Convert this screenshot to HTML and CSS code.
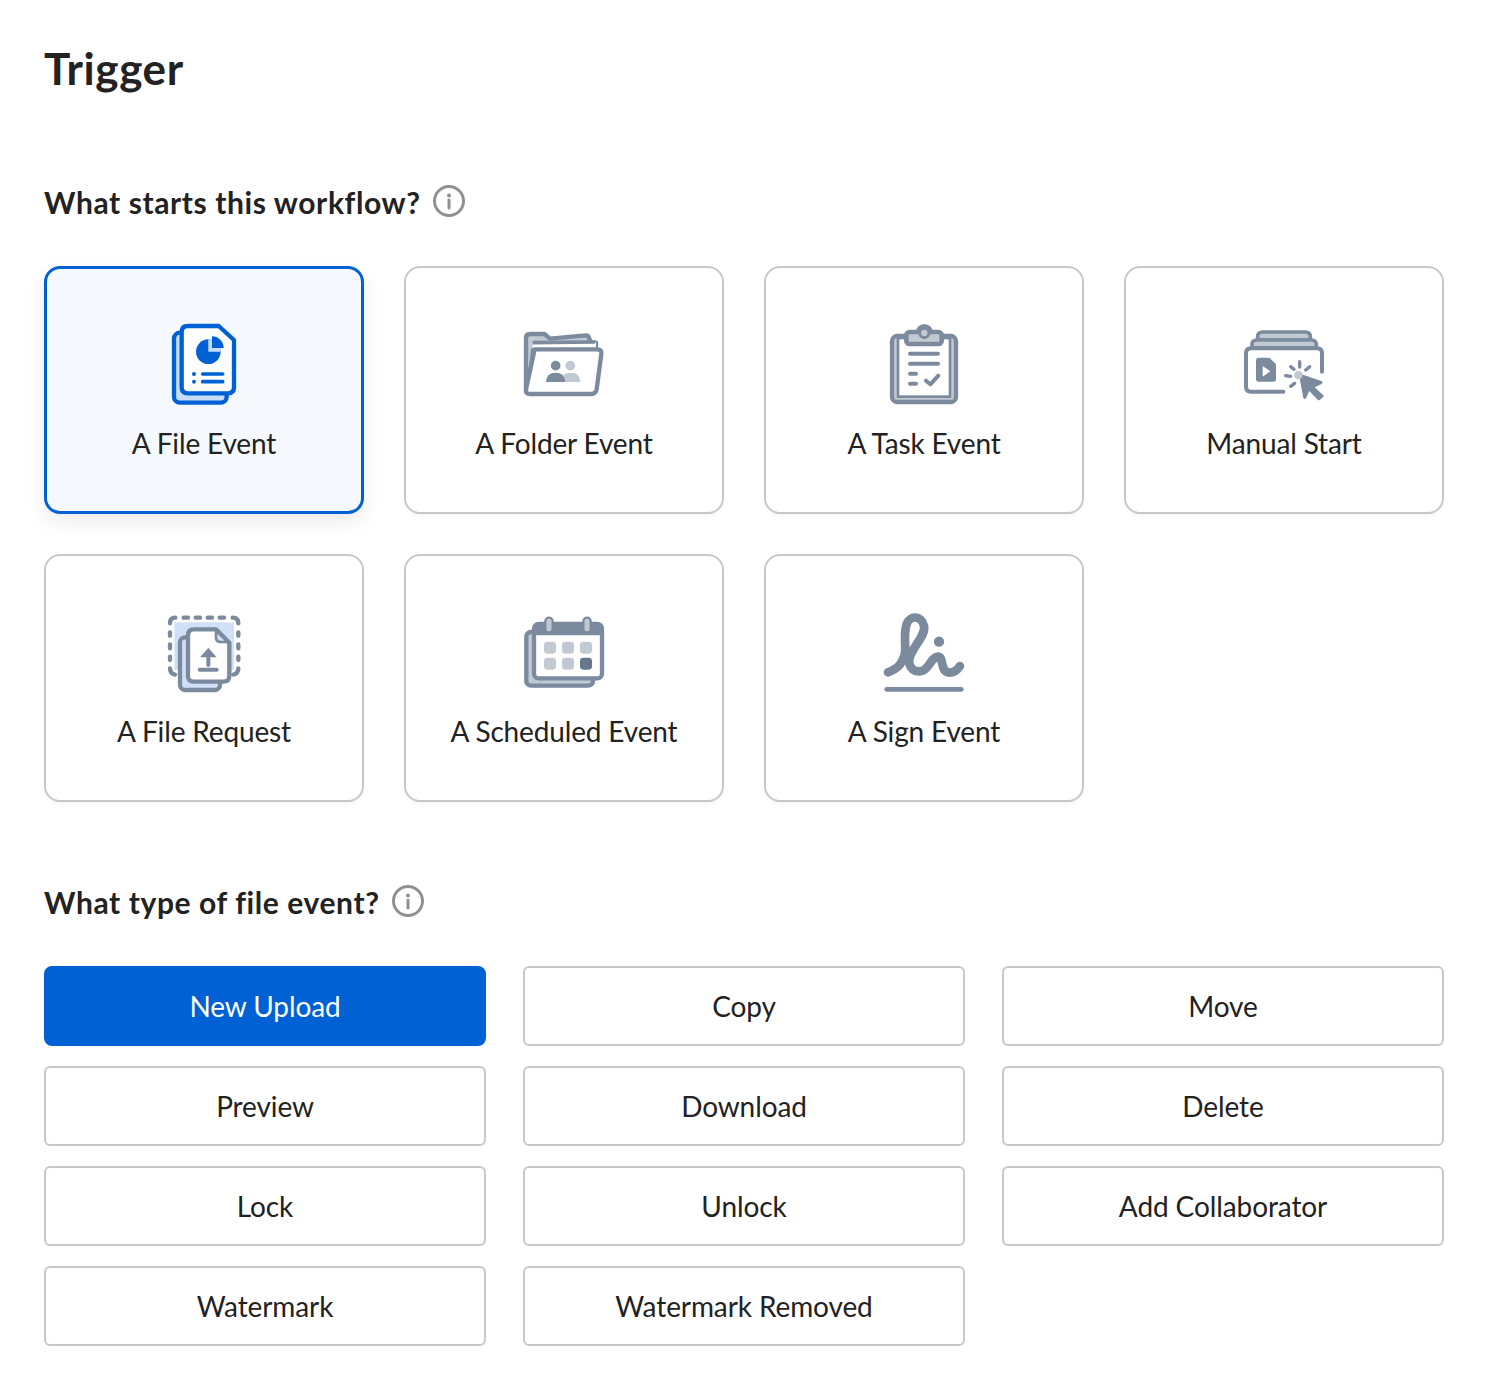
FILE: index.html
```html
<!DOCTYPE html>
<html lang="en">
<head>
<meta charset="utf-8">
<title>Trigger</title>
<link rel="stylesheet" href="styles.css">
</head>
<body>
<main class="page">
  <h1 class="title">Trigger</h1>
  <div class="heading heading-first"><h2>What starts this workflow?</h2>
    <svg class="info" viewBox="0 0 32 32"><circle cx="16" cy="16" r="14.5"/><circle class="dot" cx="16" cy="10.5" r="2"/><path d="M16 15v8"/></svg>
  </div>
  <section class="cards">
    <button class="card selected">
      <svg class="icon" viewBox="-3 0 390 330">
        <rect x="102" y="68" width="158" height="210" rx="18" fill="#c6dcf7" stroke="#0061d5" stroke-width="13"/>
        <path d="M143 48H236L282 90V232Q282 250 264 250H143Q125 250 125 232V66Q125 48 143 48Z" fill="#fff" stroke="#0061d5" stroke-width="13" stroke-linejoin="round"/>
        <circle cx="205" cy="125" r="37" fill="#0061d5"/>
        <path d="M205 125V88A37 37 0 0 1 242 125Z" fill="#c6dcf7"/>
        <path d="M216 79A35 35 0 0 1 251 114H216Z" fill="#0061d5"/>
        <circle cx="162" cy="192" r="6" fill="#0061d5"/><circle cx="162" cy="215" r="6" fill="#0061d5"/>
        <path d="M188 192H248M188 215H248" stroke="#0061d5" stroke-width="11" stroke-linecap="round"/>
      </svg>
      <span>A File Event</span>
    </button>
    <button class="card">
      <svg class="icon" viewBox="-3 0 390 330">
        <path d="M78 245V84Q78 72 90 72H133L150 86L258 76Q266 76 268 86L272 98H288V118H100L84 250Z" fill="#c1cad3" stroke="#7b8b9d" stroke-width="13" stroke-linejoin="round"/>
        <path d="M98 100L288 96V118H98Z" fill="#fff"/>
        <path d="M98 98L286 96" stroke="#7b8b9d" stroke-width="11"/>
        <path d="M104 118H292Q306 118 304 132L290 238Q288 252 274 252H90Q76 252 78 238Z" fill="#fff" stroke="#7b8b9d" stroke-width="13" stroke-linejoin="round"/>
        <circle cx="167" cy="167" r="14.5" fill="#7b8b9d"/>
        <circle cx="211" cy="167" r="14.5" fill="#c1cad3"/>
        <path d="M196 216H241Q240 188 213 188Q200 188 190 194Q196 204 196 216Z" fill="#c1cad3"/>
        <path d="M138 216H196Q195 188 167 188Q139 188 138 216Z" fill="#7b8b9d"/>
      </svg>
      <span>A Folder Event</span>
    </button>
    <button class="card">
      <svg class="icon" viewBox="-3 0 390 330">
        <rect x="96" y="78" width="192" height="198" rx="16" fill="#c1cad3" stroke="#7b8b9d" stroke-width="13"/>
        <rect x="114" y="84" width="156" height="176" fill="#fff" stroke="#7b8b9d" stroke-width="8"/>
        <circle cx="193" cy="68" r="26" fill="#7b8b9d"/>
        <rect x="139" y="66" width="106" height="36" rx="10" fill="#c1cad3" stroke="#7b8b9d" stroke-width="14"/>
        <circle cx="193" cy="69" r="14" fill="#c1cad3" stroke="#7b8b9d" stroke-width="9"/>
        <path d="M150 131H234M150 161H234M150 191H168M150 221H168" stroke="#7b8b9d" stroke-width="12" stroke-linecap="round"/>
        <path d="M198 212L211 223L235 197" fill="none" stroke="#7b8b9d" stroke-width="12" stroke-linecap="round" stroke-linejoin="round"/>
      </svg>
      <span>A Task Event</span>
    </button>
    <button class="card">
      <svg class="icon" viewBox="-3 0 390 330">
        <path d="M113 90V80Q113 66 128 66H256Q271 66 271 80V90Z" fill="#c1cad3" stroke="#7b8b9d" stroke-width="11" stroke-linejoin="round"/>
        <path d="M96 114V104Q96 90 110 90H274Q289 90 289 104V114Z" fill="#c1cad3" stroke="#7b8b9d" stroke-width="11" stroke-linejoin="round"/>
        <path d="M306 185V130Q306 115 291 115H93Q78 115 78 130V230Q78 245 93 245H190" fill="none" stroke="#7b8b9d" stroke-width="12" stroke-linecap="round"/>
        <path d="M116 143H148L168 163V207Q168 215 160 215H116Q108 215 108 207V151Q108 143 116 143Z" fill="#7b8b9d"/>
        <path d="M128 168L151 184L128 200Z" fill="#fff"/>
        <path d="M239 155V171M212 170L222 178M269 170L257 180M197 197L212 199M212 229L224 220" stroke="#7b8b9d" stroke-width="10" stroke-linecap="round"/>
        <path d="M236 190L306 214Q310 218 305 222L284 232L310 256Q312 259 309 262L299 270Q296 272 293 269L268 243L258 265Q254 269 250 264Z" fill="#7b8b9d"/>
        <circle cx="235" cy="195" r="13" fill="#c1cad3"/>
      </svg>
      <span>Manual Start</span>
    </button>
    <button class="card">
      <svg class="icon" viewBox="-3 -6 390 330">
        <rect x="103" y="67" width="179" height="143" fill="#cfe0f7"/>
        <path d="M90 70Q90 53 106 53M131 53H144M167 53H180M203 53H216M239 53H252M278 53Q295 53 295 70M295 97V107M295 133V145M295 170V180M295 205Q295 221 280 224M90 97V107M90 133V145M90 170V180M90 205Q90 221 105 224" fill="none" stroke="#7b8b9d" stroke-width="13" stroke-linecap="round"/>
        <rect x="120" y="112" width="120" height="158" rx="16" fill="#cfe0f7" stroke="#7b8b9d" stroke-width="13"/>
        <path d="M162 88H228L268 128V228Q268 245 250 245H162Q144 245 144 228V106Q144 88 162 88Z" fill="#fff" stroke="#7b8b9d" stroke-width="13" stroke-linejoin="round"/>
        <path d="M228 92V112Q228 126 242 126H264Z" fill="#cfe0f7" stroke="#7b8b9d" stroke-width="8" stroke-linejoin="round"/>
        <path d="M205 143L230 172H180Z" fill="#7b8b9d"/>
        <path d="M205 168V195M179 209H230" stroke="#7b8b9d" stroke-width="12" stroke-linecap="round"/>
      </svg>
      <span>A File Request</span>
    </button>
    <button class="card">
      <svg class="icon" viewBox="-3 -6 390 330">
        <rect x="79" y="96" width="200" height="161" rx="14" fill="#c1cad3" stroke="#7b8b9d" stroke-width="13"/>
        <rect x="102" y="72" width="204" height="163" rx="14" fill="#fff" stroke="#7b8b9d" stroke-width="13"/>
        <path d="M102 72H306V106H102Z" fill="#7b8b9d"/>
        <rect x="136" y="53" width="22" height="44" rx="11" fill="#c1cad3" stroke="#7b8b9d" stroke-width="7"/>
        <rect x="250" y="53" width="22" height="44" rx="11" fill="#c1cad3" stroke="#7b8b9d" stroke-width="7"/>
        <g fill="#c1cad3">
          <rect x="132" y="125" width="36" height="36" rx="10"/><rect x="186" y="125" width="36" height="36" rx="10"/><rect x="240" y="125" width="36" height="36" rx="10"/>
          <rect x="132" y="173" width="36" height="36" rx="10"/><rect x="186" y="173" width="36" height="36" rx="10"/>
        </g>
        <rect x="240" y="173" width="36" height="36" rx="10" fill="#66788c"/>
      </svg>
      <span>A Scheduled Event</span>
    </button>
    <button class="card">
      <svg class="icon" viewBox="-3 -6 390 330">
        <path d="M84 217C105 208 125 200 135 160C138 130 130 100 140 72C150 45 185 45 192 78C198 110 155 140 148 178C145 205 165 220 188 212C208 204 215 170 235 170C252 172 240 218 268 218C282 218 292 210 300 198" fill="none" stroke="#7b8b9d" stroke-width="26" stroke-linecap="round" stroke-linejoin="round"/>
        <circle cx="237" cy="125" r="15.5" fill="#7b8b9d"/>
        <path d="M80 268H304" stroke="#7b8b9d" stroke-width="14" stroke-linecap="round"/>
      </svg>
      <span>A Sign Event</span>
    </button>
  </section>
  <div class="heading heading-second"><h2>What type of file event?</h2>
    <svg class="info" viewBox="0 0 32 32"><circle cx="16" cy="16" r="14.5"/><circle class="dot" cx="16" cy="10.5" r="2"/><path d="M16 15v8"/></svg>
  </div>
  <section class="options">
    <button class="option active">New Upload</button>
    <button class="option">Copy</button>
    <button class="option">Move</button>
    <button class="option">Preview</button>
    <button class="option">Download</button>
    <button class="option">Delete</button>
    <button class="option">Lock</button>
    <button class="option">Unlock</button>
    <button class="option">Add Collaborator</button>
    <button class="option">Watermark</button>
    <button class="option">Watermark Removed</button>
  </section>
</main>
</body>
</html>
```

FILE: styles.css
```css
* { box-sizing: border-box; }
html, body { margin: 0; background: #fff; }
body { font-family: Lato, "Open Sans", sans-serif; color: #222; }
.page { width: 1492px; height: 1390px; padding: 38px 48px 0 44px; }
.title { margin: 0; font-size: 44px; line-height: 60px; font-weight: 700; letter-spacing: .6px; }
.heading { display: flex; align-items: center; gap: 12px; height: 44px; }
.heading h2 { margin: 0; font-size: 30px; line-height: 44px; font-weight: 700; letter-spacing: .6px; }
.heading-first { margin-top: 82px; }
.heading-second { margin-top: 78px; }
.info { width: 32px; height: 32px; margin-top: -2px; fill: none; stroke: #909090; stroke-width: 3; stroke-linecap: round; }
.info .dot { fill: #909090; stroke: none; }
.cards { display: grid; grid-template-columns: repeat(4, 320px); grid-auto-rows: 248px; gap: 40px; margin-top: 42px; }
.card { display: flex; flex-direction: column; align-items: center; padding: 42px 0 0; border: 2px solid #c8c8c8; border-radius: 16px; background: #fff; font: inherit; font-size: 28px; line-height: 40px; letter-spacing: -.15px; color: #222; box-shadow: 0 2px 4px rgba(0,0,0,.04); }
.card span { margin-top: 3px; }
.icon { width: 130px; height: 110px; flex: none; }
.card.selected { padding-top: 41px; border: 3px solid #0061d5; background: #f5f9fd; box-shadow: 0 8px 20px rgba(0,0,0,.08); }
.options { display: grid; grid-template-columns: repeat(3, 442px); grid-auto-rows: 80px; gap: 20px 37px; margin-top: 42px; }
.option { border: 2px solid #c8c8c8; border-radius: 6px; background: #fff; font: inherit; font-size: 28px; letter-spacing: -.1px; color: #222; }
.option.active { border-color: #0061d5; background: #0061d5; color: #fff; border-radius: 8px; }
```
